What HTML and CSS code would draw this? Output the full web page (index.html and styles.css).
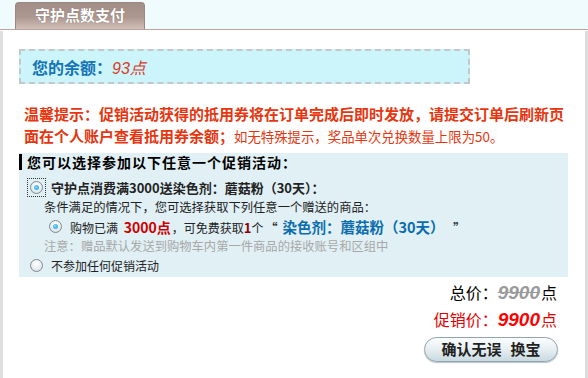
FILE: index.html
```html
<!DOCTYPE html>
<html lang="zh-CN">
<head>
<meta charset="utf-8">
<title>守护点数支付</title>
<link rel="stylesheet" href="styles.css">
</head>
<body>
<div class="top">
  <div class="tab">守护点数支付</div>
</div>
<div class="panel">
  <div class="balance"><span class="bal-label">您的余额：</span><span class="bal-value">93点</span></div>
  <div class="notice">
    <div class="notice-line first">温馨提示：促销活动获得的抵用券将在订单完成后即时发放，请提交订单后刷新页</div>
    <div class="notice-line"><span class="notice-bold">面在个人账户查看抵用券余额；</span><span class="notice-normal">如无特殊提示，奖品单次兑换数量上限为50。</span></div>
  </div>
  <div class="promo">
    <div class="promo-title">您可以选择参加以下任意一个促销活动：</div>
    <div class="promo-list">
      <div class="row row-opt"><span class="focus"><span class="radio checked"></span></span><b class="opt-title">守护点消费满3000送染色剂：蘑菇粉（30天）：</b></div>
      <div class="row row-indent">条件满足的情况下，您可选择获取下列任意一个赠送的商品：</div>
      <div class="row row-sub"><span class="radio checked"></span><span>购物已满 <b class="amt">3000点</b>，可免费获取<b class="num">1</b>个<b class="q">“</b><b class="gift">染色剂：蘑菇粉（30天）</b><b class="q">”</b></span></div>
      <div class="row row-indent note">注意：赠品默认发送到购物车内第一件商品的接收账号和区组中</div>
      <div class="row row-opt"><span class="radio"></span><span>不参加任何促销活动</span></div>
    </div>
  </div>
  <div class="prices">
    <div class="total">总价：<span class="old">9900</span>点</div>
    <div class="sale">促销价：<span class="new">9900</span>点</div>
    <div class="actions"><button class="btn" type="button">确认无误<span class="btn-gap"></span>换宝</button></div>
  </div>
</div>
</body>
</html>
```
FILE: styles.css
```css
html, body {
  margin: 0;
  padding: 0;
  background: #ffffff;
}
body {
  font-family: "Noto Sans CJK SC", "Liberation Sans", sans-serif;
  font-size: 12px;
  color: #222;
  width: 588px;
  height: 378px;
  overflow: hidden;
}
.top {
  height: 27px;
  padding: 2px 0 0 15px;
  background: #effbfd;
  border-bottom: 1px solid #b8a49c;
  display: flex;
  align-items: flex-end;
}
.tab {
  box-sizing: border-box;
  width: 130px;
  height: 27px;
  border: 1px solid #9c8881;
  border-bottom: none;
  border-radius: 4px 4px 0 0;
  background: linear-gradient(#a28d87, #ad9891 55%, #d2c0b8);
  color: #fff;
  font-weight: bold;
  font-size: 15px;
  line-height: 24px;
  text-align: center;
  text-shadow: 0 0 1px #6d5a54;
}
.panel {
  box-sizing: border-box;
  min-height: 348px;
  margin-top: 1px;
  border-left: 3px solid #e1dfdd;
  border-right: 3px solid #dcdcdc;
  padding: 18px 17px 0 16px;
  background: #fff;
}
.balance {
  box-sizing: border-box;
  width: 451px;
  height: 35px;
  border: 2px dashed #c3c8ca;
  background: #ccf4fb;
  padding-left: 11px;
  display: flex;
  align-items: center;
  font-size: 16px;
}
.bal-label {
  color: #1474b6;
  font-weight: bold;
}
.bal-value {
  color: #d8391c;
  font-style: italic;
  font-family: "Liberation Sans", "Noto Sans CJK SC", sans-serif;
}
.notice {
  margin: 19px 0 6px 5px;
  color: #e5360f;
}
.notice-line {
  height: 22px;
  line-height: 22px;
  white-space: nowrap;
}
.notice-line.first {
  font-size: 15px;
  font-weight: bold;
  letter-spacing: 0;
}
.notice-bold {
  font-size: 15px;
  font-weight: bold;
}
.notice-normal {
  font-size: 13.4px;
}
.promo {
  background: #e1f0f5;
  padding-bottom: 1px;
}
.promo-title {
  border-left: 3px solid #000;
  padding-left: 5px;
  height: 16px;
  line-height: 16px;
  position: relative;
  top: 1px;
  font-size: 14px;
  font-weight: bold;
  color: #000;
  letter-spacing: 1px;
}
.promo-list {
  padding-top: 9px;
}
.row {
  height: 19.5px;
  line-height: 19.5px;
  display: flex;
  align-items: center;
  white-space: nowrap;
  color: #222;
}
.row b {
  font-weight: bold;
}
.opt-title {
  font-size: 13px;
}
.row-opt .radio,
.row-opt .focus {
  margin-left: 11px;
  margin-right: 8px;
}
.row-opt .focus .radio {
  margin: 0;
}
.focus {
  display: inline-flex;
  outline: 1px dotted #333;
  outline-offset: 2px;
}
.row-indent {
  padding-left: 25px;
  font-size: 12.3px;
}
.row-sub .radio {
  margin-left: 30px;
  margin-right: 8px;
}
.radio {
  box-sizing: border-box;
  display: inline-block;
  width: 13px;
  height: 13px;
  border-radius: 50%;
  border: 1px solid #7f8a90;
  background: radial-gradient(circle at 50% 35%, #ffffff, #e6ecef 60%, #c9d2d7);
  position: relative;
  flex: none;
}
.radio.checked::after {
  content: "";
  position: absolute;
  left: 3px;
  top: 3px;
  width: 5px;
  height: 5px;
  border-radius: 50%;
  background: radial-gradient(circle at 40% 40%, #7fd6ff, #1a9be0);
}
.amt {
  color: #cc0000;
  font-size: 14px;
  margin: 0 1px 0 3px;
}
.num {
  color: #8a0000;
  font-size: 13px;
}
.q {
  color: #222;
  margin-left: 2px;
}
.gift {
  color: #0b6cae;
  font-size: 14.5px;
  margin: 0 14px 0 5px;
}
.note {
  color: #a8a8a8;
}
.prices {
  padding-right: 11px;
  text-align: right;
}
.total {
  height: 26px;
  line-height: 26px;
  margin-top: 2px;
  font-size: 16px;
  color: #000;
}
.old {
  color: #9a9a9a;
  font-family: "Liberation Sans", sans-serif;
  font-weight: bold;
  font-style: italic;
  font-size: 19px;
  text-decoration: line-through;
  margin-right: 1px;
}
.sale {
  height: 28px;
  line-height: 28px;
  font-size: 16px;
  color: #e30000;
}
.new {
  color: #ff0000;
  font-family: "Liberation Sans", sans-serif;
  font-weight: bold;
  font-style: italic;
  font-size: 19px;
  margin-right: 1px;
}
.actions {
  display: flex;
  justify-content: flex-end;
  margin-top: 4px;
}
.btn {
  box-sizing: border-box;
  width: 134px;
  height: 25px;
  margin-right: -1px;
  border: 1px solid #93a3ad;
  border-radius: 13px;
  background: linear-gradient(#fbfdfe, #e6eef2 50%, #c9d9e1);
  box-shadow: 0 1px 1px #b5c2c9;
  font-family: "Noto Sans CJK SC", sans-serif;
  font-size: 15px;
  font-weight: bold;
  color: #222;
  padding: 0;
  line-height: 22px;
}
.btn-gap {
  display: inline-block;
  width: 9px;
}
```
